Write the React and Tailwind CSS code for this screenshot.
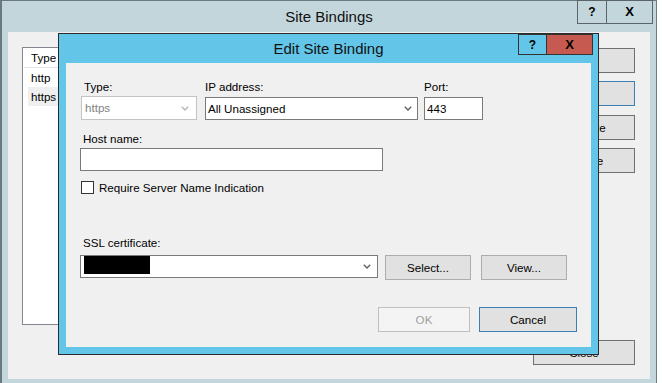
import React from "react";

function Chevron({ color = "#5a5a5a" }) {
  return (
    <svg width="8" height="5" viewBox="0 0 8 5" className="shrink-0">
      <path d="M0.8 0.8 L4 4 L7.2 0.8" stroke={color} strokeWidth="1.4" fill="none" />
    </svg>
  );
}

function OuterBtn({ label, focused, className = "" }) {
  return (
    <div
      className={`h-[25px] w-[102px] bg-[#e1e1e1] border flex items-center justify-center ${
        focused ? "border-[#3c7fb1]" : "border-[#707070]"
      } ${className}`}
    >
      {label}
    </div>
  );
}

function DlgBtn({ label, w, disabled, focused }) {
  return (
    <div
      className={`h-[25px] border flex items-center justify-center ${w} ${
        disabled
          ? "bg-[#f4f4f4] border-[#bfbfbf] text-[#a0a0a0]"
          : focused
          ? "bg-[#e1e1e1] border-[#3c7fb1]"
          : "bg-[#e1e1e1] border-[#adadad]"
      }`}
    >
      {label}
    </div>
  );
}

export default function App() {
  return (
    <div className="relative w-[662px] h-[383px] overflow-hidden bg-white font-['Liberation_Sans',Arial,sans-serif] text-[11.6px] leading-[14px] text-black">
      {/* Outer window: Site Bindings */}
      <div className="absolute left-0 top-0 w-[657px] h-[400px] bg-[#c3d6dc] border-l-2 border-t border-r border-[#6b787e] flex flex-col">
        <div className="grid grid-cols-[1fr_auto_1fr] h-[31px] shrink-0">
          <div />
          <div className="text-[15px] leading-[31px] text-[#111]">Site Bindings</div>
          <div className="flex justify-end items-start pr-[3px] -mt-px">
            <div className="w-[30px] h-[24px] border border-[#59656b] flex items-center justify-center font-bold text-[12px]">?</div>
            <div className="w-[46px] h-[24px] border-y border-r border-[#59656b] flex items-center justify-center font-bold text-[13px]">X</div>
          </div>
        </div>
        <div className="mx-[6px] h-[347px] shrink-0 bg-[#f0f0f0] flex pl-[14px] pt-[15px]">
          <div className="w-[499px] h-[278px] bg-white border border-[#828790] flex flex-col">
            <div className="h-[20px] mx-px flex items-center pl-[7px] border-b border-[#e5e5e5]">Type</div>
            <div className="h-[19px] flex items-center pl-[8px]">http</div>
            <div className="h-[19px] ml-[5px] bg-[#efefef] flex items-center pl-[3px]">https</div>
          </div>
          <div className="ml-[12px] flex flex-col">
            <OuterBtn label="Add..." className="mt-px" />
            <OuterBtn label="Edit..." focused className="mt-[8px]" />
            <OuterBtn label="Remove" className="mt-[9px]" />
            <OuterBtn label="Browse" className="mt-[8px]" />
            <OuterBtn label="Close" className="mt-[167px]" />
          </div>
        </div>
      </div>

      {/* Dialog: Edit Site Binding */}
      <div className="absolute left-[58px] top-[33px] w-[541px] h-[322px] bg-[#63c6e9] border border-[#2b2b2b] flex flex-col">
        <div className="grid grid-cols-[1fr_auto_1fr] h-[29px] shrink-0">
          <div />
          <div className="text-[15px] leading-[29px] text-[#111]">Edit Site Binding</div>
          <div className="flex justify-end items-start pr-[5px]">
            <div className="w-[29px] h-[21px] border border-[#333] flex items-center justify-center font-bold text-[12px]">?</div>
            <div className="w-[46px] h-[21px] border-y border-r border-[#333] bg-[#c75a50] flex items-center justify-center font-bold text-[13px]">X</div>
          </div>
        </div>
        <div className="mx-[7px] h-[284px] shrink-0 bg-[#f0f0f0] flex flex-col pl-[14px] pt-[17px]">
          {/* Row 1 */}
          <div className="flex items-start">
            <div className="ml-px w-[116px] flex flex-col">
              <div className="h-[16px] pl-[3px]">Type:</div>
              <div className="h-[24px] bg-white border border-[#c4c4c4] flex items-center justify-between pl-[3px] pr-[7px] text-[#838383]">
                <span>https</span>
                <Chevron color="#b5b5b5" />
              </div>
            </div>
            <div className="ml-[8px] w-[213px] flex flex-col">
              <div className="h-[17px]">IP address:</div>
              <div className="h-[23px] bg-white border border-[#7a7a7a] flex items-center justify-between pl-[2px] pr-[5px]">
                <span>All Unassigned</span>
                <Chevron color="#606060" />
              </div>
            </div>
            <div className="ml-[6px] w-[59px] flex flex-col">
              <div className="h-[17px]">Port:</div>
              <div className="h-[23px] bg-white border border-[#7a7a7a] flex items-center pl-[2px]">443</div>
            </div>
          </div>

          {/* Host name */}
          <div className="mt-[12px] h-[16px] pl-[3px]">Host name:</div>
          <div className="h-[23px] w-[303px] bg-white border border-[#7a7a7a]" />

          {/* SNI checkbox */}
          <div className="mt-[10px] h-[13px] flex items-center">
            <div className="ml-px w-[13px] h-[13px] bg-white border border-[#333]" />
            <span className="ml-[5px]">Require Server Name Indication</span>
          </div>

          {/* SSL certificate */}
          <div className="mt-[42px] h-[19px] pl-[3px]">SSL certificate:</div>
          <div className="flex items-start">
            <div className="h-[23px] w-[298px] bg-white border border-[#7a7a7a] flex items-start justify-between pl-[3px] pr-[6px]">
              <div className="w-[66px] h-[18px] bg-black" />
              <div className="h-[21px] flex items-center">
                <Chevron color="#606060" />
              </div>
            </div>
            <div className="ml-[7px]">
              <DlgBtn label="Select..." w="w-[86px]" />
            </div>
            <div className="ml-[10px]">
              <DlgBtn label="View..." w="w-[86px]" />
            </div>
          </div>

          {/* OK / Cancel */}
          <div className="mt-[27px] flex justify-end pr-[14px]">
            <DlgBtn label="OK" w="w-[92px]" disabled />
            <div className="ml-[9px]">
              <DlgBtn label="Cancel" w="w-[98px]" focused />
            </div>
          </div>
        </div>
      </div>
    </div>
  );
}
